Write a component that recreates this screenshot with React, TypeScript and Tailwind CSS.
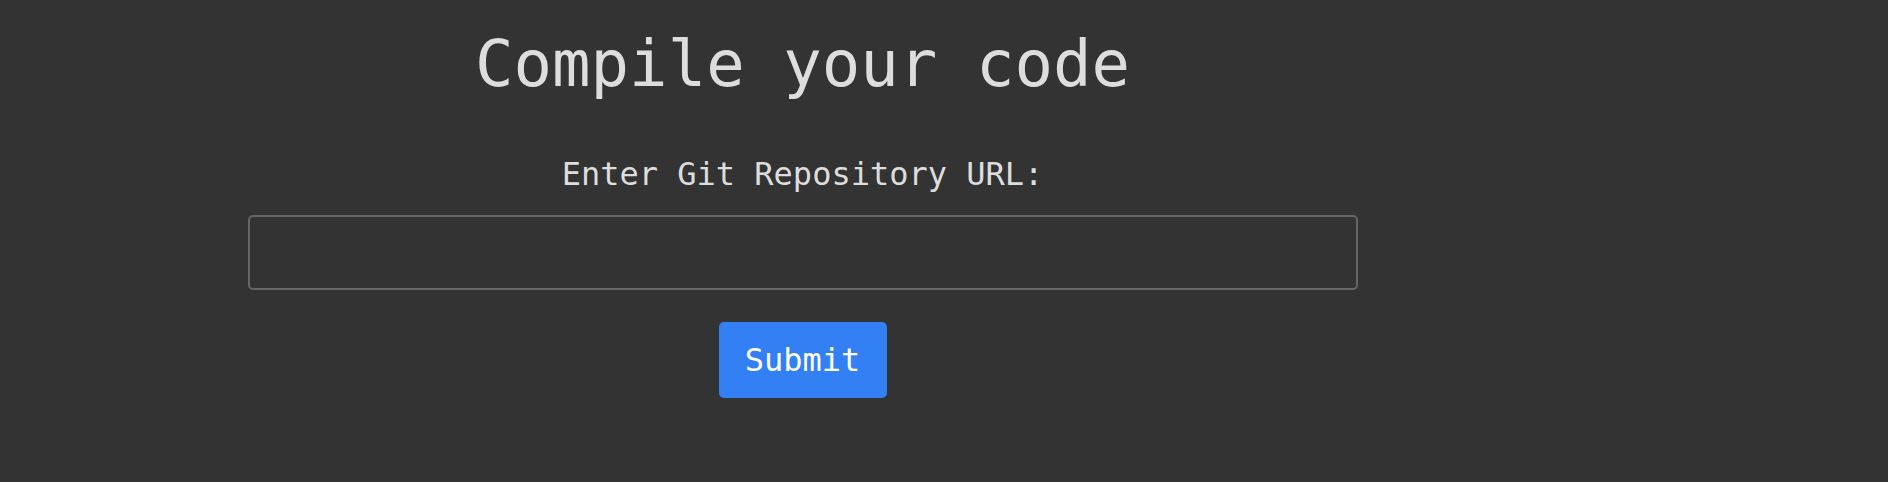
import React from 'react';

const App = () => {
  return (
    <div className="min-h-screen bg-[#333333] font-['DejaVu_Sans_Mono',monospace] text-[#dddddd]">
      <div className="w-[1605px] flex flex-col items-center pt-[27px]">
        <h1 className="text-[64px] leading-[75px] font-normal">Compile your code</h1>
        <form className="flex flex-col items-center" onSubmit={(e) => e.preventDefault()}>
          <label htmlFor="repo" className="mt-[54px] text-[32px] leading-[37px]">
            Enter Git Repository URL:
          </label>
          <input
            id="repo"
            type="text"
            className="mt-[22px] w-[1110px] h-[75px] rounded-[5px] border-2 border-[#666666] bg-transparent px-4 text-[32px] text-[#dddddd] outline-none"
          />
          <button
            type="submit"
            className="mt-[32px] h-[76px] w-[168px] rounded-[5px] bg-[#3380f5] text-[32px] leading-[37px] text-white"
          >
            Submit
          </button>
        </form>
      </div>
    </div>
  );
};

export default App;
